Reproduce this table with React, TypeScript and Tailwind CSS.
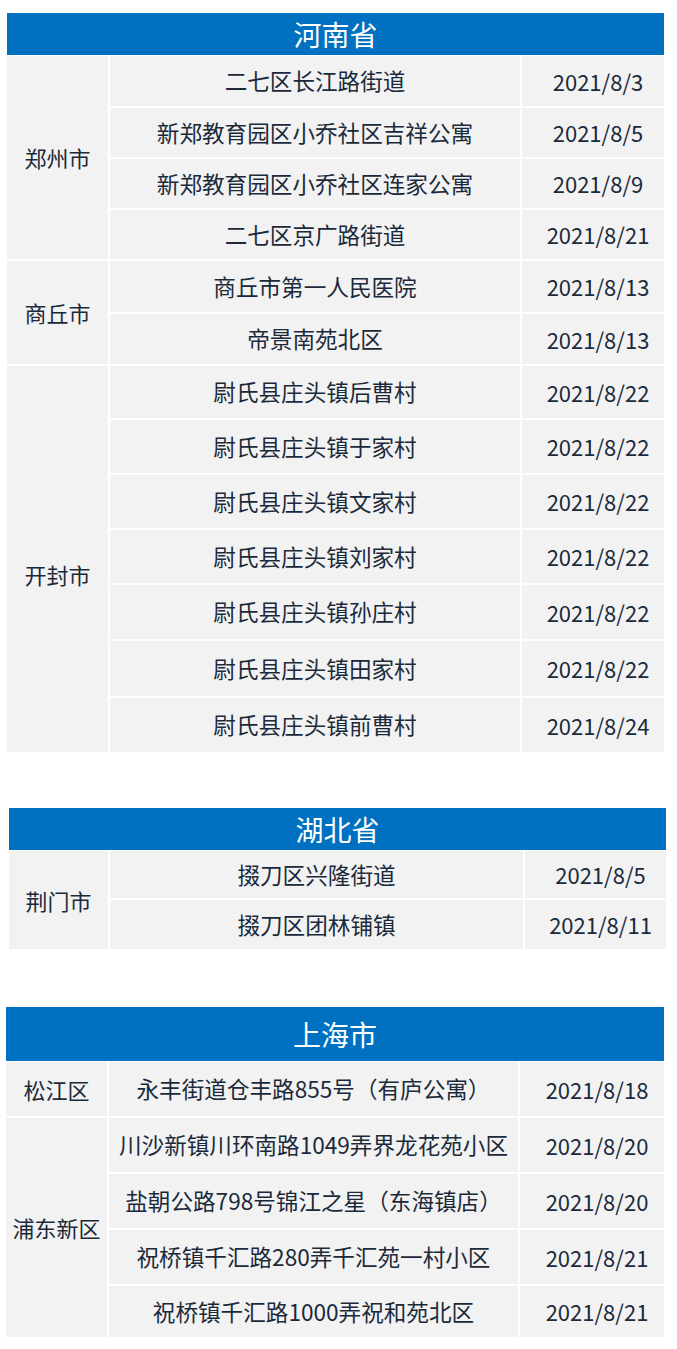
import React from "react";

type Group = { name: string; rows: [string, string][]; labelClass?: string };

const FONT = { fontFamily: '"Noto Sans CJK SC", "Noto Sans", sans-serif' };

const henan: Group[] = [
  {
    name: "郑州市",
    rows: [
      ["二七区长江路街道", "2021/8/3"],
      ["新郑教育园区小乔社区吉祥公寓", "2021/8/5"],
      ["新郑教育园区小乔社区连家公寓", "2021/8/9"],
      ["二七区京广路街道", "2021/8/21"],
    ],
  },
  {
    name: "商丘市",
    rows: [
      ["商丘市第一人民医院", "2021/8/13"],
      ["帝景南苑北区", "2021/8/13"],
    ],
  },
  {
    name: "开封市",
    labelClass: "pt-[30px]",
    rows: [
      ["尉氏县庄头镇后曹村", "2021/8/22"],
      ["尉氏县庄头镇于家村", "2021/8/22"],
      ["尉氏县庄头镇文家村", "2021/8/22"],
      ["尉氏县庄头镇刘家村", "2021/8/22"],
      ["尉氏县庄头镇孙庄村", "2021/8/22"],
      ["尉氏县庄头镇田家村", "2021/8/22"],
      ["尉氏县庄头镇前曹村", "2021/8/24"],
    ],
  },
];

const hubei: Group[] = [
  {
    name: "荆门市",
    rows: [
      ["掇刀区兴隆街道", "2021/8/5"],
      ["掇刀区团林铺镇", "2021/8/11"],
    ],
  },
];

const shanghai: Group[] = [
  {
    name: "松江区",
    rows: [["永丰街道仓丰路855号（有庐公寓）", "2021/8/18"]],
  },
  {
    name: "浦东新区",
    rows: [
      ["川沙新镇川环南路1049弄界龙花苑小区", "2021/8/20"],
      ["盐朝公路798号锦江之星（东海镇店）", "2021/8/20"],
      ["祝桥镇千汇路280弄千汇苑一村小区", "2021/8/21"],
      ["祝桥镇千汇路1000弄祝和苑北区", "2021/8/21"],
    ],
  },
];

const spanClass: Record<number, string> = {
  1: "row-span-1",
  2: "row-span-2",
  4: "row-span-4",
  7: "row-span-7",
};

function Table({
  title,
  groups,
  wrapClass,
  headerClass,
  gridClass,
}: {
  title: string;
  groups: Group[];
  wrapClass: string;
  headerClass: string;
  gridClass: string;
}) {
  const cells: React.ReactNode[] = [];
  groups.forEach((g, gi) => {
    g.rows.forEach((r, ri) => {
      if (ri === 0) {
        cells.push(
          <div
            key={`l${gi}`}
            className={`${spanClass[g.rows.length]} bg-[#f2f2f2] flex items-center justify-center text-[22px] text-[#1b2a3b] whitespace-nowrap ${g.labelClass ?? ""}`}
          >
            {g.name}
          </div>
        );
      }
      cells.push(
        <div
          key={`m${gi}-${ri}`}
          className="bg-[#f2f2f2] flex items-center justify-center text-[22.6px] text-[#1b2a3b] whitespace-nowrap"
        >
          {r[0]}
        </div>
      );
      cells.push(
        <div
          key={`d${gi}-${ri}`}
          className="bg-[#f2f2f2] flex items-center justify-center pl-[10px] text-[22px] text-[#1b2a3b] whitespace-nowrap"
        >
          {r[1]}
        </div>
      );
    });
  });
  return (
    <div className={wrapClass}>
      <div
        className={`${headerClass} bg-[#0070c0] flex items-center justify-center text-[28px] text-white mb-[1px]`}
      >
        {title}
      </div>
      <div className={`grid gap-[2px] bg-white ${gridClass}`}>{cells}</div>
    </div>
  );
}

export default function App() {
  return (
    <div className="w-[677px] min-h-[1349px] bg-white flex flex-col" style={FONT}>
      <Table
        title="河南省"
        groups={henan}
        wrapClass="mt-[13px] ml-[7px] w-[657px]"
        headerClass="h-[42px]"
        gridClass="grid-cols-[101px_410px_142px] grid-rows-[50px_49px_49px_49px_51px_50px_52px_53px_53px_53px_54px_55px_54px]"
      />
      <Table
        title="湖北省"
        groups={hubei}
        wrapClass="mt-[56px] ml-[9px] w-[657px]"
        headerClass="h-[42px]"
        gridClass="grid-cols-[99px_413px_141px] grid-rows-[47px_49px]"
      />
      <Table
        title="上海市"
        groups={shanghai}
        wrapClass="mt-[58px] ml-[6px] w-[658px]"
        headerClass="h-[54px]"
        gridClass="grid-cols-[101px_409px_144px] grid-rows-[54px_54px_54px_54px_51px]"
      />
    </div>
  );
}
